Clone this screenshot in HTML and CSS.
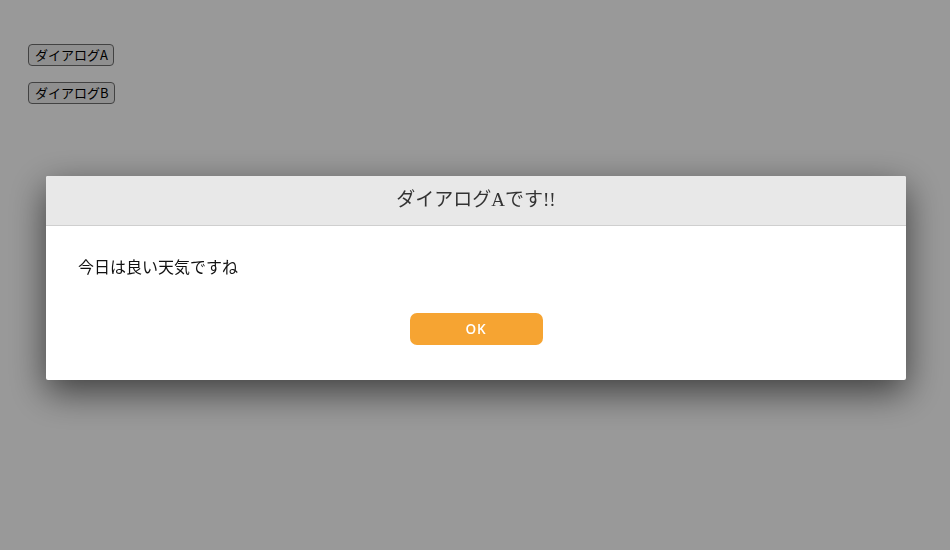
FILE: index.html
```html
<!DOCTYPE html>
<html lang="ja">
<head>
  <meta charset="UTF-8">
  <title>ダイアログ</title>
  <link rel="stylesheet" href="styles.css">
</head>
<body>

  <div class="page">
    <button class="open-btn">ダイアログA</button>
    <button class="open-btn">ダイアログB</button>
  </div>

  <div class="overlay">
    <div class="dialog">
      <div class="dialog-header">ダイアログAです!!</div>
      <div class="dialog-body">
        <p class="dialog-text">今日は良い天気ですね</p>
        <div class="dialog-actions">
          <button class="ok-btn">OK</button>
        </div>
      </div>
    </div>
  </div>

</body>
</html>
```

FILE: styles.css
```css
:root {
  --accent: #f6a432;
  --header-bg: #e8e8e8;
  --line: #cfcfcf;
}

html, body {
  margin: 0;
  height: 100%;
  background-color: #fff;
}

.page {
  display: flex;
  flex-direction: column;
  align-items: flex-start;
  gap: 16px;
  padding: 44px 28px;
}

.open-btn {
  font-family: "Noto Sans CJK JP", "Liberation Sans", sans-serif;
  font-size: 13px;
  font-weight: 400;
  line-height: 18px;
  height: 22px;
  padding: 0 5px 0 6px;
  color: #000;
  background-color: #efefef;
  border: 1px solid #6f6f6f;
  border-radius: 4px;
}

.overlay {
  position: fixed;
  inset: 0;
  background-color: rgba(0, 0, 0, 0.4);
  display: flex;
  align-items: center;
  justify-content: center;
  padding-top: 6px;
}

.dialog {
  width: 860px;
  margin-left: 2px;
  background-color: #fff;
  border-radius: 2px;
  overflow: hidden;
  box-shadow: 0 12px 36px rgba(0, 0, 0, 0.6);
}

.dialog-header {
  height: 49px;
  line-height: 47px;
  text-align: center;
  font-family: "Liberation Serif", "Noto Sans CJK JP", serif;
  font-size: 19px;
  color: #333;
  background-color: var(--header-bg);
  border-bottom: 1px solid var(--line);
}

.dialog-body {
  padding: 30px 32px 35px;
}

.dialog-text {
  margin: 0;
  font-family: "Liberation Serif", "Noto Sans CJK JP", serif;
  font-size: 16px;
  line-height: 24px;
  color: #111;
}

.dialog-actions {
  display: flex;
  justify-content: center;
  margin-top: 33px;
}

.ok-btn {
  width: 133px;
  height: 32px;
  border: none;
  border-radius: 7px;
  background-color: var(--accent);
  color: #fff;
  font-family: "Open Sans", "Liberation Sans", sans-serif;
  font-size: 13.5px;
  font-weight: 600;
  letter-spacing: 1px;
}
```
